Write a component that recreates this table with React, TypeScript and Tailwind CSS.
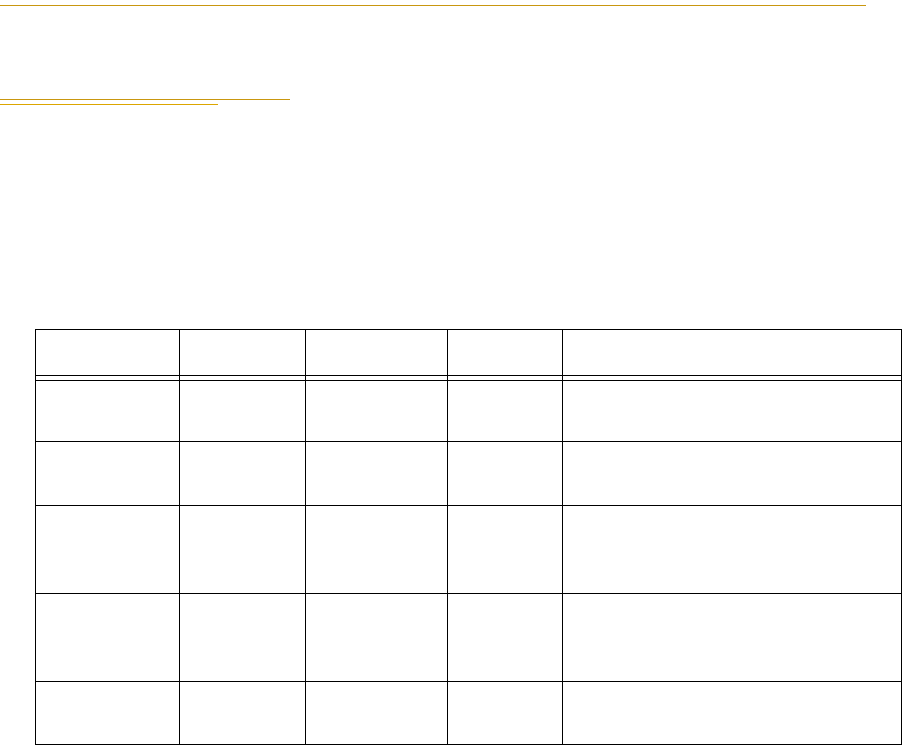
import React from "react";

const cols = ["w-[144px]", "w-[126px]", "w-[142px]", "w-[115px]", "w-[339px]"];
const rowHeights = ["h-[61px]", "h-[64px]", "h-[88px]", "h-[88px]", "h-[63px]"];

export default function App() {
  return (
    <div className="min-h-[746px] w-[902px] bg-white flex flex-col" style={{ fontFamily: '"Liberation Sans", Arial, sans-serif' }}>
      <div className="mt-[5px] h-px w-[866px] bg-[#c9970f]" />
      <div className="mt-[93px] h-px w-[290px] bg-[#c9970f]" />
      <div className="mt-[4px] h-px w-[218px] bg-[#dca600]" />
      <div className="mt-[224px] ml-[35px] w-[867px] border-l border-t border-black flex flex-col">
        <div className="flex">
          {cols.map((c, i) => (
            <div key={i} className={`${c} h-[51px] border-r border-b border-black flex flex-col`}>
              <div className="h-[45px]" />
              <div className="h-px bg-black" />
              <div className="h-[4px]" />
            </div>
          ))}
        </div>
        {rowHeights.map((h, r) => (
          <div key={r} className="flex">
            {cols.map((c, i) => (
              <div key={i} className={`${c} ${h} border-r border-b border-black`} />
            ))}
          </div>
        ))}
      </div>
    </div>
  );
}
